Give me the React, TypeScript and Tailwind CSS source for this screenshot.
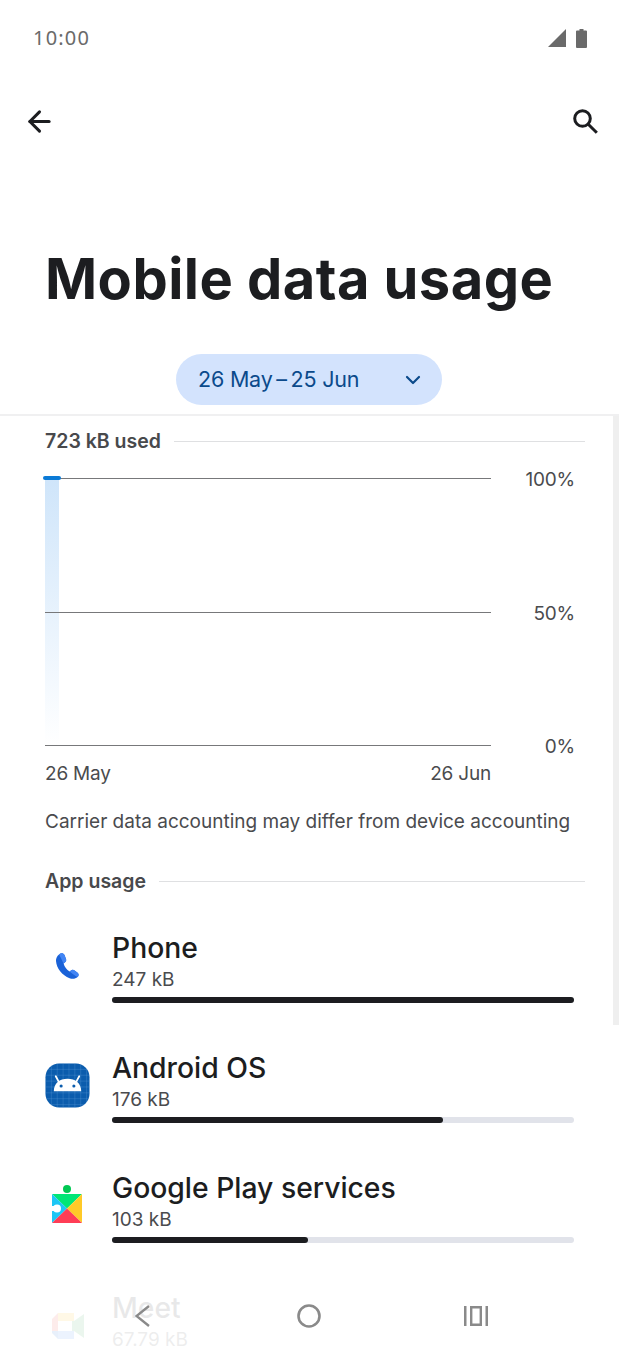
import React from 'react';
import { ArrowLeft, ChevronDown } from 'lucide-react';

const apps = [
  { name: 'Phone', size: '247 kB', pct: 100, icon: 'phone' },
  { name: 'Android OS', size: '176 kB', pct: 71.7, icon: 'android' },
  { name: 'Google Play services', size: '103 kB', pct: 42.5, icon: 'play' },
  { name: 'Meet', size: '67.79 kB', pct: 27, icon: 'meet' },
];

const PhoneIcon = () => (
  <svg className="-ml-[2px]" width="26" height="30" viewBox="0 0 26 30">
    <path d="M5 3.5 C7 1.5 9.5 2 10.5 4 L12 8 C12.6 9.6 12 10.6 10.8 11.5 L9.6 12.4 C10.5 15.8 12.6 18.6 15.6 20.4 L17 19.4 C18.2 18.5 19.4 18.5 20.6 19.4 L23.6 21.8 C25 23 25 24.8 23.6 26 C21.6 27.8 18.6 28.4 15.6 27.2 C8 24.4 2.6 17.4 2 10 C1.8 7.4 3 5.2 5 3.5 Z" fill="#1a62d8" />
    <path d="M5 3.5 C7 1.5 9.5 2 10.5 4 L12 8 C12.6 9.6 12 10.6 10.8 11.5 L9.6 12.4 C8.2 10 7 7 5 3.5 Z" fill="#4285f4" />
    <path d="M15.6 20.4 L17 19.4 C18.2 18.5 19.4 18.5 20.6 19.4 L23.6 21.8 C25 23 25 24.8 23.6 26 C21 24.6 18 22.4 15.6 20.4 Z" fill="#4285f4" />
  </svg>
);

const AndroidIcon = () => (
  <svg width="45" height="45" viewBox="0 0 46 46">
    <defs>
      <pattern id="grid" width="6" height="6" patternUnits="userSpaceOnUse">
        <path d="M6 0H0V6" fill="none" stroke="#5b9ad6" strokeWidth="0.6" />
      </pattern>
    </defs>
    <rect x="0.5" y="0.5" width="45" height="45" rx="14" fill="#0b5cad" />
    <rect x="0.5" y="0.5" width="45" height="45" rx="14" fill="url(#grid)" />
    <path d="M9 29 C9 20.5 15 16 23 16 C31 16 37 20.5 37 29 Z" fill="#fff" />
    <path d="M14 19 L11 13.5 M32 19 L35 13.5" stroke="#fff" strokeWidth="1.8" strokeLinecap="round" />
    <circle cx="16.5" cy="23.5" r="1.6" fill="#0b5cad" />
    <circle cx="29.5" cy="23.5" r="1.6" fill="#0b5cad" />
  </svg>
);

const PlayIcon = () => (
  <svg className="-ml-[1px] mb-[3px]" width="30" height="38" viewBox="0 0 30 38">
    <circle cx="15" cy="4" r="4" fill="#00c853" />
    <path d="M15 23.5 L0 9 H30 Z" fill="#00e676" />
    <path d="M15 23.5 L0 9 V38 Z" fill="#1cc6f5" />
    <path d="M15 23.5 L30 9 V38 Z" fill="#ffca28" />
    <path d="M15 23.5 L30 38 H0 Z" fill="#ff3d56" />
    <circle cx="5" cy="23.5" r="4" fill="#fff" />
    <rect x="0" y="21" width="5" height="5" fill="#fff" />
  </svg>
);

const MeetIcon = () => (
  <svg width="32" height="26" viewBox="0 0 32 26">
    <path d="M6 0 H22 V8 H6 Z" fill="#fbbc04" />
    <path d="M0 6 L6 0 V18 H0 Z" fill="#ea4335" />
    <path d="M0 18 H6 V26 L0 20 Z" fill="#1967d2" />
    <path d="M6 18 H22 V26 H6 Z" fill="#4285f4" />
    <path d="M20 8 H22 V18 H20 Z" fill="#34a853" />
    <path d="M22 8 L32 1 V25 L22 18 Z" fill="#34a853" />
    <rect x="6" y="8" width="14" height="10" fill="#fff" />
  </svg>
);

const icons: Record<string, React.ReactNode> = {
  phone: <PhoneIcon />,
  android: <AndroidIcon />,
  play: <PlayIcon />,
  meet: <MeetIcon />,
};

const ChartRow = ({ label }: { label: string }) => (
  <div className="relative flex items-center h-px overflow-visible">
    <div className="w-[446px] h-px bg-[#77787a]" />
    <span className="ml-auto mr-[10px] pt-[4px] text-[19px] tracking-[-0.2px] text-[#4a4b4e]">{label}</span>
  </div>
);

const SectionHead = ({ title }: { title: string }) => (
  <div className="flex items-center gap-[13px]">
    <span className="text-[19.5px] font-semibold text-[#48494c] leading-6 whitespace-nowrap">{title}</span>
    <div className="flex-1 h-px bg-[#dfe0e2]" />
  </div>
);

export default function App() {
  return (
    <div
      className="relative w-[619px] h-[1350px] overflow-hidden bg-white flex flex-col"
      style={{ fontFamily: 'Inter, "Open Sans", sans-serif' }}
    >
      {/* status bar */}
      <div className="flex items-center justify-between pl-[33px] pr-[32px] h-[76px] shrink-0">
        <span className="text-[20px] tracking-[1.2px] text-[#6a6a6a] leading-6 font-['Noto_Sans',sans-serif]">10:00</span>
        <div className="flex items-center gap-[10px]">
          <svg width="18" height="18" viewBox="0 0 18 19" preserveAspectRatio="none">
            <path d="M18 0 V19 H0 Z" fill="#6a6a6a" />
          </svg>
          <svg width="11" height="19" viewBox="0 0 11 19">
            <path d="M3.5 0 H7.5 V1.5 H10 Q11 1.5 11 2.5 V18 Q11 19 10 19 H1 Q0 19 0 18 V2.5 Q0 1.5 1 1.5 H3.5 Z" fill="#6a6a6a" />
          </svg>
        </div>
      </div>

      {/* toolbar */}
      <div className="flex items-center justify-between pl-[23px] pr-[21px] h-[48px] mt-[21px] shrink-0">
        <ArrowLeft size={33} strokeWidth={2.2} className="text-[#1c1d20]" />
        <svg width="25" height="25" viewBox="0 0 25 25" fill="none" stroke="#1c1d20" strokeWidth="3">
          <circle cx="9.5" cy="9.5" r="7.8" />
          <path d="M15 15 L23.8 23.8" />
        </svg>
      </div>

      <h1 className="pl-[45px] mt-[100px] text-[56px] leading-[68px] font-bold tracking-[0.45px] text-[#1c1d20] whitespace-nowrap shrink-0">
        Mobile data usage
      </h1>

      {/* date pill */}
      <div className="mt-[41px] h-[62px] border-b-2 border-[#f0f0f1] flex justify-center items-start shrink-0 pr-[1px]">
        <div className="w-[266px] h-[51px] rounded-full bg-[#d3e3fd] flex items-center pl-[22px] pr-[17px] text-[#0b4a8b]">
          <span className="text-[21.5px] tracking-[-0.2px] whitespace-nowrap">26 May{'\u2009'}–{'\u2009'}25 Jun</span>
          <ChevronDown size={24} strokeWidth={2.2} className="ml-auto" />
        </div>
      </div>

      {/* scrolling content */}
      <div className="flex-1 min-h-0 overflow-hidden pl-[45px] pr-[34px] pt-[13px]">
        <SectionHead title="723 kB used" />

        <div className="relative mt-[25px] h-[268px] flex flex-col justify-between">
          <div className="absolute left-0 top-[1px] w-[14px] h-[266px] bg-gradient-to-b from-[#cfe5fa] to-white" />
          <ChartRow label="100%" />
          <ChartRow label="50%" />
          <ChartRow label="0%" />
          <div className="absolute left-[-2px] top-[-2px] w-[18px] h-[4px] rounded-full bg-[#0b7ad6]" />
        </div>

        <div className="flex justify-between w-[446px] mt-[16px] text-[19px] tracking-[-0.2px] leading-6 text-[#4a4b4e]">
          <span>26 May</span>
          <span>26 Jun</span>
        </div>

        <p className="mt-[24px] text-[19px] leading-6 text-[#4a4b4e] whitespace-nowrap">
          Carrier data accounting may differ from device accounting
        </p>

        <div className="mt-[35px]">
          <SectionHead title="App usage" />
        </div>

        <div className="mt-[38px] flex flex-col gap-[48px]">
          {apps.map((app) => (
            <div key={app.name} className="flex">
              <div className="w-[67px] shrink-0 flex items-center pb-[3px]">
                <div className="w-[45px] flex justify-center">{icons[app.icon]}</div>
              </div>
              <div className="flex-1 pr-[11px]">
                <div className="text-[28.3px] leading-[34px] font-medium text-[#1c1d20] whitespace-nowrap">{app.name}</div>
                <div className="mt-[3px] text-[19px] leading-[24px] text-[#4a4b4e]">{app.size}</div>
                <div className="mt-[5px] h-[6px] rounded-full bg-[#e1e3ea]">
                  <div className="h-full rounded-full bg-[#1c1d20]" style={{ width: `${app.pct}%` }} />
                </div>
              </div>
            </div>
          ))}
        </div>
      </div>

      {/* scrollbar */}
      <div className="absolute right-0 top-[416px] w-[6px] h-[609px] bg-[#efefef]" />

      {/* nav bar overlay */}
      <div className="absolute left-0 right-0 bottom-0 h-[80px] bg-white/90 flex items-center justify-between pl-[135px] pr-[131px] pt-[12px]">
        <svg width="19" height="24" viewBox="0 0 19 24" fill="none" stroke="#8a8a8a" strokeWidth="2.4">
          <path d="M14 2 L1.5 12 L14 22" />
        </svg>
        <svg width="24" height="24" viewBox="0 0 24 24" fill="none" stroke="#8a8a8a" strokeWidth="2.6">
          <circle cx="12" cy="12" r="10.5" />
        </svg>
        <svg width="24" height="20" viewBox="0 0 24 20" fill="#8a8a8a">
          <rect x="0" y="0" width="2.5" height="20" />
          <rect x="21.5" y="0" width="2.5" height="20" />
          <path d="M6 0 H18 V20 H6 Z M8.4 2.4 V17.6 H15.6 V2.4 Z" fillRule="evenodd" />
        </svg>
      </div>
    </div>
  );
}
